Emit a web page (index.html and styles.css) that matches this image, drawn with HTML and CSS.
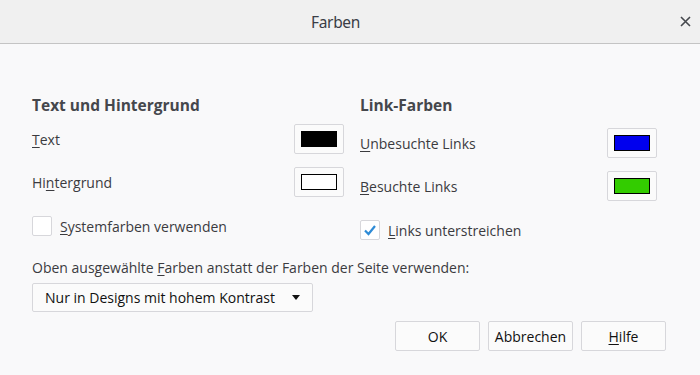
FILE: index.html
```html
<!DOCTYPE html>
<html lang="de">
<head>
    <meta charset="UTF-8">
    <title>Farben</title>
    <link rel="stylesheet" href="styles.css">
</head>
<body>
    <header class="titlebar">
        <span class="title">Farben</span>
        <span class="close">
            <svg width="11" height="11" viewBox="0 0 11 11"><path d="M1 1L10 10M10 1L1 10" stroke="#45484d" stroke-width="1.6"/></svg>
        </span>
    </header>
    <div class="content">
        <div class="columns">
            <div class="col col-left">
                <h2>Text und Hintergrund</h2>
                <div class="row">
                    <span class="label"><u>T</u>ext</span>
                    <button class="swatch"><span class="chip" style="background:#000000"></span></button>
                </div>
                <div class="row">
                    <span class="label">Hi<u>n</u>tergrund</span>
                    <button class="swatch"><span class="chip" style="background:#ffffff"></span></button>
                </div>
                <label class="check">
                    <span class="box"></span>
                    <span><u>S</u>ystemfarben verwenden</span>
                </label>
            </div>
            <div class="col col-right">
                <h2>Link-Farben</h2>
                <div class="row">
                    <span class="label"><u>U</u>nbesuchte Links</span>
                    <button class="swatch"><span class="chip" style="background:#0000ee"></span></button>
                </div>
                <div class="row">
                    <span class="label"><u>B</u>esuchte Links</span>
                    <button class="swatch"><span class="chip" style="background:#33cc00"></span></button>
                </div>
                <label class="check">
                    <span class="box">
                        <svg width="14" height="12" viewBox="0 0 14 12"><path d="M2 6.5L5.5 10L12 2" fill="none" stroke="#2e8bd6" stroke-width="2.2"/></svg>
                    </span>
                    <span><u>L</u>inks unterstreichen</span>
                </label>
            </div>
        </div>
        <p class="desc">Oben ausgewählte <u>F</u>arben anstatt der Farben der Seite verwenden:</p>
        <div class="select">
            <span>Nur in Designs mit hohem Kontrast</span>
            <span class="arrow"></span>
        </div>
        <div class="actions">
            <button class="btn">OK</button>
            <button class="btn">Abbrechen</button>
            <button class="btn"><u>H</u>ilfe</button>
        </div>
    </div>
</body>
</html>
```

FILE: styles.css
```css
body {
    margin: 0;
    font-family: "Open Sans", "Noto Sans", sans-serif;
    font-size: 14px;
    color: #3b3b3f;
    background: #f9f9fa;
}
u {
    text-decoration: underline;
    text-underline-offset: 2px;
}
.titlebar {
    height: 43px;
    background: #f0f0f0;
    border-bottom: 1px solid #c4c4c4;
    display: flex;
    align-items: center;
    justify-content: center;
    padding-right: 29px;
    position: relative;
}
.title {
    font-family: "Noto Sans", sans-serif;
    font-size: 15.5px;
    color: #3a3d46;
    letter-spacing: -0.3px;
}
.close {
    position: absolute;
    right: 9px;
    top: 16px;
    width: 11px;
    height: 11px;
}
.close svg {
    display: block;
}
.content {
    padding: 51px 34px 0 32px;
}
.columns {
    display: flex;
}
.col-left {
    width: 312px;
}
.col-right {
    width: 297px;
    margin-left: 16px;
}
h2 {
    margin: 0;
    font-size: 15.5px;
    line-height: 20px;
    font-weight: bold;
    color: #45474c;
}
.row {
    display: flex;
    align-items: center;
    justify-content: space-between;
    height: 30px;
    margin-top: 13px;
}
.col-left .row:first-of-type {
    margin-top: 9px;
}
.swatch {
    width: 50px;
    height: 30px;
    padding: 0;
    border: 1px solid #d7d7db;
    border-radius: 2px;
    background: #fbfbfb;
    display: flex;
    align-items: center;
    justify-content: center;
}
.chip {
    display: block;
    width: 34px;
    height: 14px;
    border: 1px solid #000;
}
.check {
    display: flex;
    align-items: center;
    gap: 8px;
    margin-top: 19px;
    height: 20px;
}
.box {
    width: 18px;
    height: 18px;
    border: 1px solid #d7d7db;
    border-radius: 2px;
    background: #fff;
    display: flex;
    align-items: center;
    justify-content: center;
}
.desc {
    margin: 18px 0 0;
    line-height: 20px;
}
.select {
    margin-top: 5px;
    height: 27px;
    border: 1px solid #d7d7db;
    border-radius: 2px;
    background: #fbfbfb;
    display: flex;
    align-items: center;
    justify-content: space-between;
    padding: 0 12px;
    box-sizing: content-box;
    width: 255px;
    color: #111;
}
.arrow {
    width: 0;
    height: 0;
    border-left: 4.5px solid transparent;
    border-right: 4.5px solid transparent;
    border-top: 5px solid #111;
}
.actions {
    display: flex;
    justify-content: flex-end;
    gap: 8px;
    margin-top: 9px;
}
.btn {
    width: 85px;
    height: 30px;
    border: 1px solid #d7d7db;
    border-radius: 2px;
    background: #fbfbfb;
    font-family: "Open Sans", "Noto Sans", sans-serif;
    font-size: 14px;
    color: #111;
    padding: 0;
}
```
